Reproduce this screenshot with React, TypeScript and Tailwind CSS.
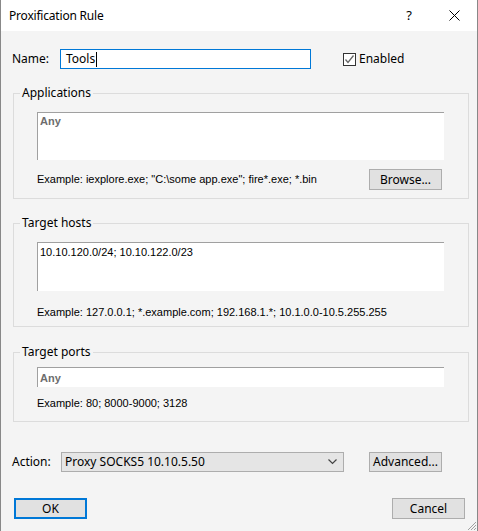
import React from "react";

const ui = "font-['Noto_Sans','Liberation_Sans',sans-serif] text-[12px]";
const tah = "font-['Liberation_Sans','DejaVu_Sans',sans-serif] text-[11px]";

function Group({ title, children, className }: { title: string; children: React.ReactNode; className?: string }) {
  return (
    <fieldset className={`ml-[12px] w-[456px] border border-[#dcdcdc] pl-[23px] ${className ?? ""}`}>
      <legend className={`${ui} ml-[-17px] px-[2px] leading-[16px] text-black`}>{title}</legend>
      {children}
    </fieldset>
  );
}

function Button({ label, primary, className }: { label: string; primary?: boolean; className?: string }) {
  return (
    <button
      className={`${ui} flex items-center justify-center bg-[#e1e1e1] text-black ${
        primary ? "border-2 border-[#0078d7]" : "border border-[#adadad]"
      } ${className ?? ""}`}
    >
      {label}
    </button>
  );
}

export default function App() {
  return (
    <div className="relative flex h-[531px] w-[478px] flex-col border-x border-[#888888] bg-[#f4f4f4]">
      {/* title bar */}
      <div className="flex h-[31px] items-center bg-white pl-[8px]">
        <span className={`${ui} tracking-[-0.2px] text-black`}>Proxification Rule</span>
        <span className={`${ui} ml-auto mr-[37px] text-[13px] text-black`}>?</span>
        <svg width="11" height="11" viewBox="0 0 11 11" className="mr-[17px]">
          <path d="M0.5 0.5 L10.5 10.5 M10.5 0.5 L0.5 10.5" stroke="#000" strokeWidth="1" />
        </svg>
      </div>

      {/* name row */}
      <div className="mt-[18px] flex h-[20px] items-center">
        <span className={`${ui} ml-[11px] w-[48px] text-black`}>Name:</span>
        <div className="flex h-[20px] w-[251px] items-center border border-[#0078d7] bg-white pl-[5px]">
          <span className={`${ui} text-black`}>Tools</span>
          <span className="ml-[1px] h-[15px] w-px bg-black" />
        </div>
        <div className="ml-[32px] flex items-center">
          <div className="flex h-[13px] w-[13px] items-center justify-center border border-[#333333] bg-white">
            <svg width="11" height="11" viewBox="0 0 11 11">
              <path d="M1.5 5.5 L4 8.5 L9.5 1.5" fill="none" stroke="#666" strokeWidth="1.3" />
            </svg>
          </div>
          <span className={`${ui} ml-[3px] text-black`}>Enabled</span>
        </div>
      </div>

      {/* applications */}
      <Group title="Applications" className="mt-[16px] pt-[11px] pb-[8px]">
        <div className="h-[48px] w-[407px] border-t border-l border-[#a0a0a0] bg-white pl-[2px] pt-[1px]">
          <div className={`${tah} font-bold leading-[14px] text-[#6d6d6d]`}>Any</div>
        </div>
        <div className="mt-[9px] flex h-[21px] w-[405px] items-center">
          <span className={`${tah} text-black`}>Example: iexplore.exe; "C:\some app.exe"; fire*.exe; *.bin</span>
          <Button label="Browse..." className="ml-auto h-[21px] w-[73px]" />
        </div>
      </Group>

      {/* target hosts */}
      <Group title="Target hosts" className="mt-[16px] pt-[11px] pb-[6px]">
        <div className="h-[49px] w-[407px] border-t border-l border-[#a0a0a0] bg-white pl-[2px] pt-[2px]">
          <div className={`${tah} leading-[14px] text-black`}>10.10.120.0/24; 10.10.122.0/23</div>
        </div>
        <div className={`${tah} mt-[13px] leading-[16px] text-black`}>
          Example: 127.0.0.1; *.example.com; 192.168.1.*; 10.1.0.0-10.5.255.255
        </div>
      </Group>

      {/* target ports */}
      <Group title="Target ports" className="mt-[17px] pt-[7px] pb-[10px]">
        <div className="flex h-[20px] w-[407px] items-center border-t border-l border-[#a0a0a0] bg-white pl-[2px]">
          <span className={`${tah} font-bold leading-[14px] text-[#6d6d6d]`}>Any</span>
        </div>
        <div className={`${tah} mt-[8px] leading-[16px] text-black`}>Example: 80; 8000-9000; 3128</div>
      </Group>

      {/* action row */}
      <div className="mt-[30px] flex h-[20px] items-center">
        <span className={`${ui} ml-[11px] w-[49px] text-black`}>Action:</span>
        <div className="flex h-[20px] w-[283px] items-center border border-[#adadad] bg-[#e5e5e5] pl-[3px] pr-[6px]">
          <span className={`${ui} text-black`}>Proxy SOCKS5 10.10.5.50</span>
          <svg width="9" height="6" viewBox="0 0 9 6" className="ml-auto">
            <path d="M0.5 0.5 L4.5 4.5 L8.5 0.5" fill="none" stroke="#444" strokeWidth="1.2" />
          </svg>
        </div>
        <Button label="Advanced..." className="ml-[25px] h-[20px] w-[73px]" />
      </div>

      {/* buttons */}
      <div className="mt-[26px] flex h-[21px] items-center">
        <Button label="OK" primary className="ml-[13px] h-[21px] w-[73px]" />
        <Button label="Cancel" className="ml-auto mr-[12px] h-[21px] w-[73px]" />
      </div>

      {/* resize grip */}
      <svg width="12" height="12" viewBox="0 0 12 12" className="absolute right-0 bottom-0">
        <path d="M11 3 L3 11 M11 6 L6 11 M11 9 L9 11" stroke="#a0a0a0" strokeWidth="1" />
      </svg>
    </div>
  );
}
